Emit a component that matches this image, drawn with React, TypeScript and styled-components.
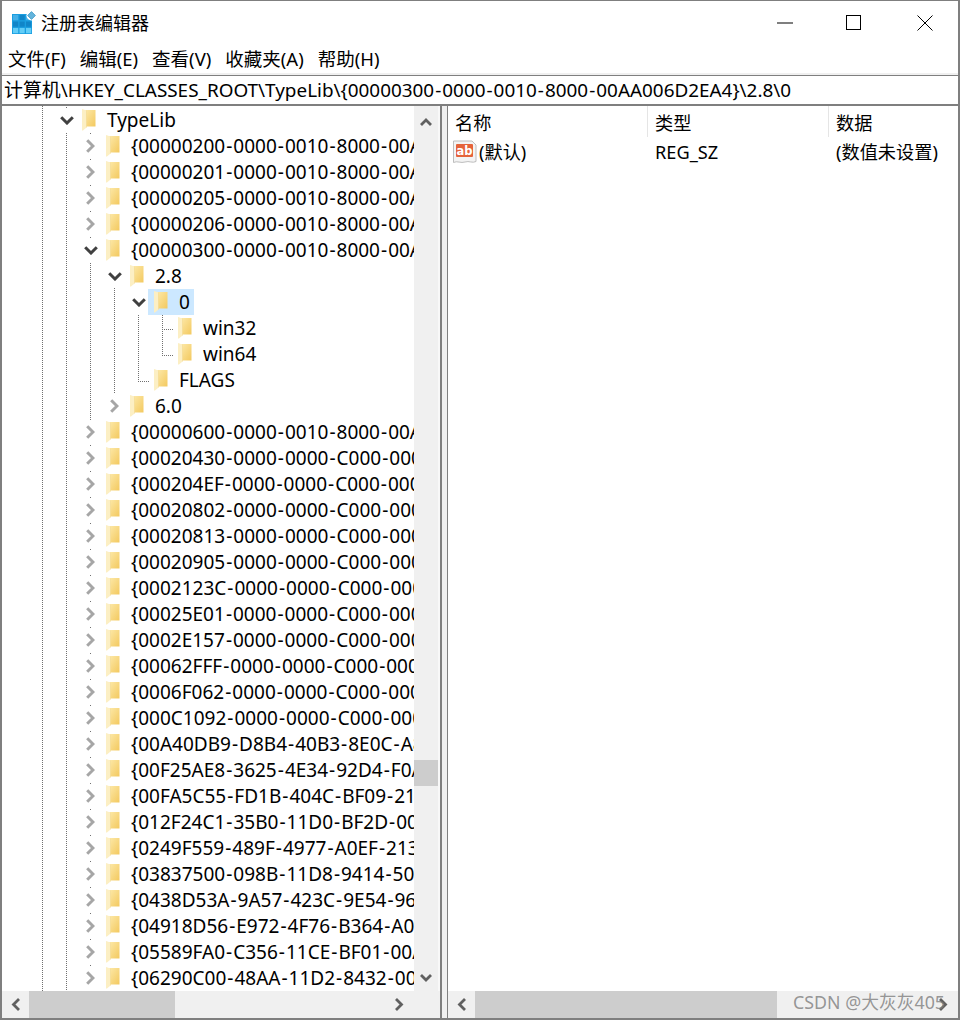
import React from "react";
import styled, { createGlobalStyle } from "styled-components";

const Global = createGlobalStyle`
  html, body { margin: 0; padding: 0; background: #fff; }
  body { font-family: "Noto Sans", "Noto Sans CJK SC", sans-serif; color: #000; }
`;

const Window = styled.div`
  position: relative;
  width: 960px;
  height: 1020px;
  box-sizing: border-box;
  border: 2px solid #7f7f7f;
  border-top-width: 1px;
  display: flex;
  flex-direction: column;
  overflow: hidden;
  background: #fff;
`;

const TitleBar = styled.div`
  height: 43px;
  flex: none;
  display: flex;
  align-items: center;
  padding-left: 10px;
`;

const TitleText = styled.span`
  margin: 1px 0 0 5px;
  font-size: 18px;
  line-height: 42px;
`;

const WindowControls = styled.div`
  margin-left: auto;
  display: flex;
  height: 100%;
  margin-right: -2px;
`;

const ControlButton = styled.div<{ $w: number }>`
  width: ${(p) => p.$w}px;
  height: 100%;
  display: flex;
  align-items: center;
  justify-content: center;
`;

const MenuBar = styled.div`
  height: 29px;
  flex: none;
  box-sizing: border-box;
  padding: 1px 0 0 6px;
  display: flex;
  align-items: center;
  gap: 14px;
  font-size: 18.5px;
`;

const MenuItem = styled.span`
  line-height: 28px;
  white-space: nowrap;
`;

const Strip = styled.div`
  height: 2px;
  flex: none;
  background: #f0f0f0;
`;

const AddressBar = styled.div`
  height: 31px;
  flex: none;
  box-sizing: border-box;
  border-top: 1px solid #7f7f7f;
  border-bottom: 2px solid #7f7f7f;
  padding-left: 2px;
  font-size: 18.9px;
  line-height: 28px;
  white-space: nowrap;
`;

const Dash = styled.span`
  margin: 0 1px;
`;

const Body = styled.div`
  flex: 1;
  min-height: 0;
  display: flex;
`;

const LeftPane = styled.div`
  width: 438px;
  flex: none;
  display: flex;
  flex-direction: column;
  border-right: 2px solid #7f7f7f;
  background: #f8f8f8;
`;

const LeftTop = styled.div`
  flex: 1;
  min-height: 0;
  display: flex;
`;

const TreeViewport = styled.div`
  position: relative;
  width: 412px;
  flex: none;
  overflow: hidden;
  background: #fff;
`;

const TreeList = styled.div`
  padding-top: 1px;
`;

const Row = styled.div<{ $level: number }>`
  height: 26px;
  display: flex;
  align-items: center;
  padding-left: ${(p) => 56 + p.$level * 24}px;
  white-space: nowrap;
  font-size: 19px;
`;

const ChevronSlot = styled.span`
  width: 17px;
  height: 26px;
  flex: none;
  display: flex;
  align-items: center;
  justify-content: center;
`;

const FolderSlot = styled.span`
  position: relative;
  width: 14px;
  height: 22px;
  flex: none;
  margin-left: 7px;
  margin-right: 11px;
`;

const FolderWrap = styled.span`
  position: relative;
  display: block;
`;

const RowLabel = styled.span`
  position: relative;
  line-height: 26px;
`;

const Selection = styled.span`
  position: absolute;
  top: -2px;
  height: 26px;
  left: -6px;
  width: 46px;
  background: #cce8ff;
`;

const TreeLines = styled.svg`
  position: absolute;
  inset: 0;
  pointer-events: none;
`;

const VScrollbar = styled.div`
  width: 24px;
  flex: none;
  background: #f0f0f0;
  display: flex;
  flex-direction: column;
`;

const VThumb = styled.div`
  height: 26px;
  flex: none;
  background: #cdcdcd;
  margin-top: 628px;
`;

const VArrow = styled.div<{ $down?: boolean }>`
  height: 26px;
  flex: none;
  box-sizing: border-box;
  display: flex;
  justify-content: center;
  align-items: center;
  ${(p) => (p.$down ? "margin-top: auto;" : "padding-top: 6px;")}
`;

const HScrollbar = styled.div<{ $end: number }>`
  height: 27px;
  flex: none;
  box-sizing: border-box;
  background: #f0f0f0;
  display: flex;
  padding-right: ${(p) => p.$end}px;
`;

const HThumb = styled.div<{ $w: number }>`
  width: ${(p) => p.$w}px;
  background: #cdcdcd;
  flex: none;
`;

const HArrow = styled.div<{ $end?: boolean }>`
  width: 27px;
  flex: none;
  display: flex;
  align-items: center;
  justify-content: center;
  ${(p) => (p.$end ? "margin-left: auto;" : "")}
`;

const Splitter = styled.div`
  width: 5px;
  flex: none;
  background: #f0f0f0;
`;

const RightPane = styled.div`
  flex: 1;
  min-width: 0;
  display: flex;
  flex-direction: column;
  border-left: 1px solid #7f7f7f;
`;

const ValueArea = styled.div`
  flex: 1;
  min-height: 0;
`;

const ColumnHeader = styled.div`
  display: grid;
  grid-template-columns: 200px 181px 1fr;
  height: 31px;
  font-size: 18.2px;
`;

const HeaderCell = styled.div`
  box-sizing: border-box;
  padding: 3px 0 0 7px;
  height: 31px;
  line-height: 28px;
  border-right: 1px solid #e5e5e5;
  &:last-child { border-right: none; }
`;

const ValueRow = styled.div`
  display: grid;
  grid-template-columns: 200px 181px 1fr;
  height: 26px;
  margin-top: 2px;
  font-size: 18.2px;
  line-height: 26px;
`;

const NameCell = styled.div`
  display: flex;
  align-items: center;
  padding-left: 5px;
`;

const NameText = styled.span`
  margin-left: 2px;
`;

const ValueCell = styled.div`
  padding-left: 7px;
  white-space: nowrap;
`;

const Watermark = styled.span`
  position: absolute;
  right: 13px;
  bottom: 5px;
  font-size: 17.8px;
  line-height: 22px;
  color: rgba(125, 125, 125, 0.8);
  white-space: nowrap;
`;

const Logo = () => (
  <svg width="24" height="24" viewBox="0 0 24 24">
    <rect x="0" y="3" width="20" height="20" fill="#1a9ee0" />
    {[1, 7.5, 14].map((x, c) =>
      [4, 10.5, 17].map((y, r) => (
        <rect
          key={`${c}-${r}`}
          x={x}
          y={y}
          width="5.2"
          height="5.2"
          fill={r === 2 ? "#62cdf7" : c === 1 || r === 1 ? "#1085c8" : "#45b0e8"}
        />
      ))
    )}
    <circle cx="19.5" cy="4.5" r="5" fill="#fff" />
    <path d="M19.5 0.6 L23.4 4.5 L19.5 8.4 L15.6 4.5 Z" fill="#63b4dc" stroke="#3a96c4" strokeWidth="0.8" />
  </svg>
);

const Chevron = ({ open }: { open: boolean }) =>
  open ? (
    <svg width="14" height="9" viewBox="0 0 14 9">
      <path d="M1.2 1.2 L7 7 L12.8 1.2" fill="none" stroke="#404040" strokeWidth="3" />
    </svg>
  ) : (
    <svg width="9" height="14" viewBox="0 0 9 14">
      <path d="M1.2 1.2 L7 7 L1.2 12.8" fill="none" stroke="#a6a6a6" strokeWidth="3" />
    </svg>
  );

const Folder = () => (
  <svg width="14" height="22" viewBox="0 0 14 22" style={{ display: "block" }}>
    <defs>
      <linearGradient id="folderBody" x1="0" x2="1" y1="0" y2="1">
        <stop offset="0" stopColor="#fde9a9" />
        <stop offset="1" stopColor="#f3c95f" />
      </linearGradient>
    </defs>
    <path d="M3 1 H13.5 V17.5 H3 Z" fill="url(#folderBody)" />
    <path d="M0 0 L4.5 1.5 V18.5 L1 21.5 H0 Z" fill="#fcefc4" />
    <path d="M4.5 1.5 V18.5" stroke="#f4d88e" strokeWidth="0.6" />
  </svg>
);

const AbIcon = () => (
  <svg width="24" height="24" viewBox="0 0 24 24">
    <path d="M0.5 1 H19 L23 5 V21.5 C19.5 23.5 16 20.5 12 22 C8 23.5 4 20.5 0.5 22.5 Z" fill="#f3f3f3" stroke="#bdbdbd" strokeWidth="1" />
    <rect x="3" y="4" width="17" height="13" rx="1" fill="#e5633a" />
    <text x="11.5" y="15" textAnchor="middle" fontSize="11.5" fontWeight="700" fontFamily="'DejaVu Sans', sans-serif" fill="#fff">ab</text>
  </svg>
);

const ArrowUp = () => (
  <svg width="12" height="8" viewBox="0 0 12 8"><path d="M1 7 L6 2 L11 7" fill="none" stroke="#606060" strokeWidth="2.8" /></svg>
);
const ArrowDown = () => (
  <svg width="12" height="8" viewBox="0 0 12 8"><path d="M1 1 L6 6 L11 1" fill="none" stroke="#606060" strokeWidth="2.8" /></svg>
);
const ArrowLeft = () => (
  <svg width="9" height="13" viewBox="0 0 9 13"><path d="M8 1 L2.5 6.5 L8 12" fill="none" stroke="#606060" strokeWidth="2.8" /></svg>
);
const ArrowRight = () => (
  <svg width="9" height="13" viewBox="0 0 9 13"><path d="M1 1 L6.5 6.5 L1 12" fill="none" stroke="#606060" strokeWidth="2.8" /></svg>
);

const Dashed = ({ text }: { text: string }) => (
  <>
    {text.split("-").map((part, i) => (
      <React.Fragment key={i}>
        {i > 0 && <Dash>-</Dash>}
        {part}
      </React.Fragment>
    ))}
  </>
);

type TreeNode = { label: string; level: number; open?: boolean; leaf?: boolean; selected?: boolean };

const closed = (label: string): TreeNode => ({ label, level: 1 });

const nodes: TreeNode[] = [
  { label: "TypeLib", level: 0, open: true },
  closed("{00000200-0000-0010-8000-00AA006D2EA4}"),
  closed("{00000201-0000-0010-8000-00AA006D2EA4}"),
  closed("{00000205-0000-0010-8000-00AA006D2EA4}"),
  closed("{00000206-0000-0010-8000-00AA006D2EA4}"),
  { label: "{00000300-0000-0010-8000-00AA006D2EA4}", level: 1, open: true },
  { label: "2.8", level: 2, open: true },
  { label: "0", level: 3, open: true, selected: true },
  { label: "win32", level: 4, leaf: true },
  { label: "win64", level: 4, leaf: true },
  { label: "FLAGS", level: 3, leaf: true },
  { label: "6.0", level: 2 },
  closed("{00000600-0000-0010-8000-00AA006D2EA4}"),
  closed("{00020430-0000-0000-C000-000000000046}"),
  closed("{000204EF-0000-0000-C000-000000000046}"),
  closed("{00020802-0000-0000-C000-000000000046}"),
  closed("{00020813-0000-0000-C000-000000000046}"),
  closed("{00020905-0000-0000-C000-000000000046}"),
  closed("{0002123C-0000-0000-C000-000000000046}"),
  closed("{00025E01-0000-0000-C000-000000000046}"),
  closed("{0002E157-0000-0000-C000-000000000046}"),
  closed("{00062FFF-0000-0000-C000-000000000046}"),
  closed("{0006F062-0000-0000-C000-000000000046}"),
  closed("{000C1092-0000-0000-C000-000000000046}"),
  closed("{00A40DB9-D8B4-40B3-8E0C-A8F3F0F2C1A1}"),
  closed("{00F25AE8-3625-4E34-92D4-F0A1B2C3D4E5}"),
  closed("{00FA5C55-FD1B-404C-BF09-21A1B2C3D4E5}"),
  closed("{012F24C1-35B0-11D0-BF2D-0000E8D0D146}"),
  closed("{0249F559-489F-4977-A0EF-2131A2B3C4D5}"),
  closed("{03837500-098B-11D8-9414-505054503030}"),
  closed("{0438D53A-9A57-423C-9E54-96A1B2C3D4E5}"),
  closed("{04918D56-E972-4F76-B364-A0A1B2C3D4E5}"),
  closed("{05589FA0-C356-11CE-BF01-00AA0055595A}"),
  closed("{06290C00-48AA-11D2-8432-006008C3FBFC}"),
];

const menus = ["文件(F)", "编辑(E)", "查看(V)", "收藏夹(A)", "帮助(H)"];

// page coordinates of the dotted tree connectors: x1, y1, x2, y2
const guides: [number, number, number, number][] = [
  [42, 106, 42, 991],
  [66, 133, 66, 991],
  [90, 263, 90, 420],
  [114, 288, 114, 393],
  [138, 315, 138, 381],
  [162, 315, 162, 355],
  [162, 329, 173, 329],
  [162, 355, 173, 355],
  [138, 381, 149, 381],
];
const ticks = Array.from({ length: 33 }, (_, i) => 133 + i * 26);

export default function App() {
  return (
    <>
      <Global />
      <Window>
        <TitleBar>
          <Logo />
          <TitleText>注册表编辑器</TitleText>
          <WindowControls>
            <ControlButton $w={64}>
              <svg width="16" height="2" viewBox="0 0 16 2"><rect width="16" height="1" y="0.5" fill="#000" /></svg>
            </ControlButton>
            <ControlButton $w={73}>
              <svg width="15" height="15" viewBox="0 0 15 15"><rect x="0.5" y="0.5" width="14" height="14" fill="none" stroke="#000" /></svg>
            </ControlButton>
            <ControlButton $w={70}>
              <svg width="16" height="16" viewBox="0 0 16 16"><path d="M0.5 0.5 L15.5 15.5 M15.5 0.5 L0.5 15.5" stroke="#000" strokeWidth="1" /></svg>
            </ControlButton>
          </WindowControls>
        </TitleBar>
        <MenuBar>
          {menus.map((m) => (
            <MenuItem key={m}>{m}</MenuItem>
          ))}
        </MenuBar>
        <Strip />
        <AddressBar>
          <Dashed text={"计算机\\HKEY_CLASSES_ROOT\\TypeLib\\{00000300-0000-0010-8000-00AA006D2EA4}\\2.8\\0"} />
        </AddressBar>
        <Body>
          <LeftPane>
            <LeftTop>
              <TreeViewport>
                <TreeList>
                  {nodes.map((n, i) => (
                    <Row key={i} $level={n.level}>
                      <ChevronSlot>{!n.leaf && <Chevron open={!!n.open} />}</ChevronSlot>
                      <FolderSlot>
                        {n.selected && <Selection />}
                        <FolderWrap>
                          <Folder />
                        </FolderWrap>
                      </FolderSlot>
                      <RowLabel>
                        <Dashed text={n.label} />
                      </RowLabel>
                    </Row>
                  ))}
                </TreeList>
                <TreeLines width="412" height="885" viewBox="2 106 412 885">
                  {guides.map(([x1, y1, x2, y2], i) => (
                    <line
                      key={i}
                      x1={x1 === x2 ? x1 + 0.5 : x1}
                      y1={y1 === y2 ? y1 + 0.5 : y1}
                      x2={x1 === x2 ? x2 + 0.5 : x2}
                      y2={y1 === y2 ? y2 + 0.5 : y2}
                      stroke="#707070"
                      strokeWidth="1"
                      strokeDasharray="1 1"
                    />
                  ))}
                  {ticks.map((y) => (
                    <rect key={y} x={90} y={y} width="1" height="1" fill="#707070" />
                  ))}
                  <rect x={66} y={107} width="1" height="1" fill="#707070" />
                </TreeLines>
              </TreeViewport>
              <VScrollbar>
                <VArrow><ArrowUp /></VArrow>
                <VThumb />
                <VArrow $down><ArrowDown /></VArrow>
              </VScrollbar>
            </LeftTop>
            <HScrollbar $end={27}>
              <HArrow><ArrowLeft /></HArrow>
              <HThumb $w={146} />
              <HArrow $end><ArrowRight /></HArrow>
            </HScrollbar>
          </LeftPane>
          <Splitter />
          <RightPane>
            <ValueArea>
              <ColumnHeader>
                <HeaderCell>名称</HeaderCell>
                <HeaderCell>类型</HeaderCell>
                <HeaderCell>数据</HeaderCell>
              </ColumnHeader>
              <ValueRow>
                <NameCell><AbIcon /><NameText>(默认)</NameText></NameCell>
                <ValueCell>REG_SZ</ValueCell>
                <ValueCell>(数值未设置)</ValueCell>
              </ValueRow>
            </ValueArea>
            <HScrollbar $end={1}>
              <HArrow><ArrowLeft /></HArrow>
              <HThumb $w={302} />
              <HArrow $end><ArrowRight /></HArrow>
            </HScrollbar>
          </RightPane>
        </Body>
        <Watermark>CSDN @大灰灰405</Watermark>
      </Window>
    </>
  );
}
